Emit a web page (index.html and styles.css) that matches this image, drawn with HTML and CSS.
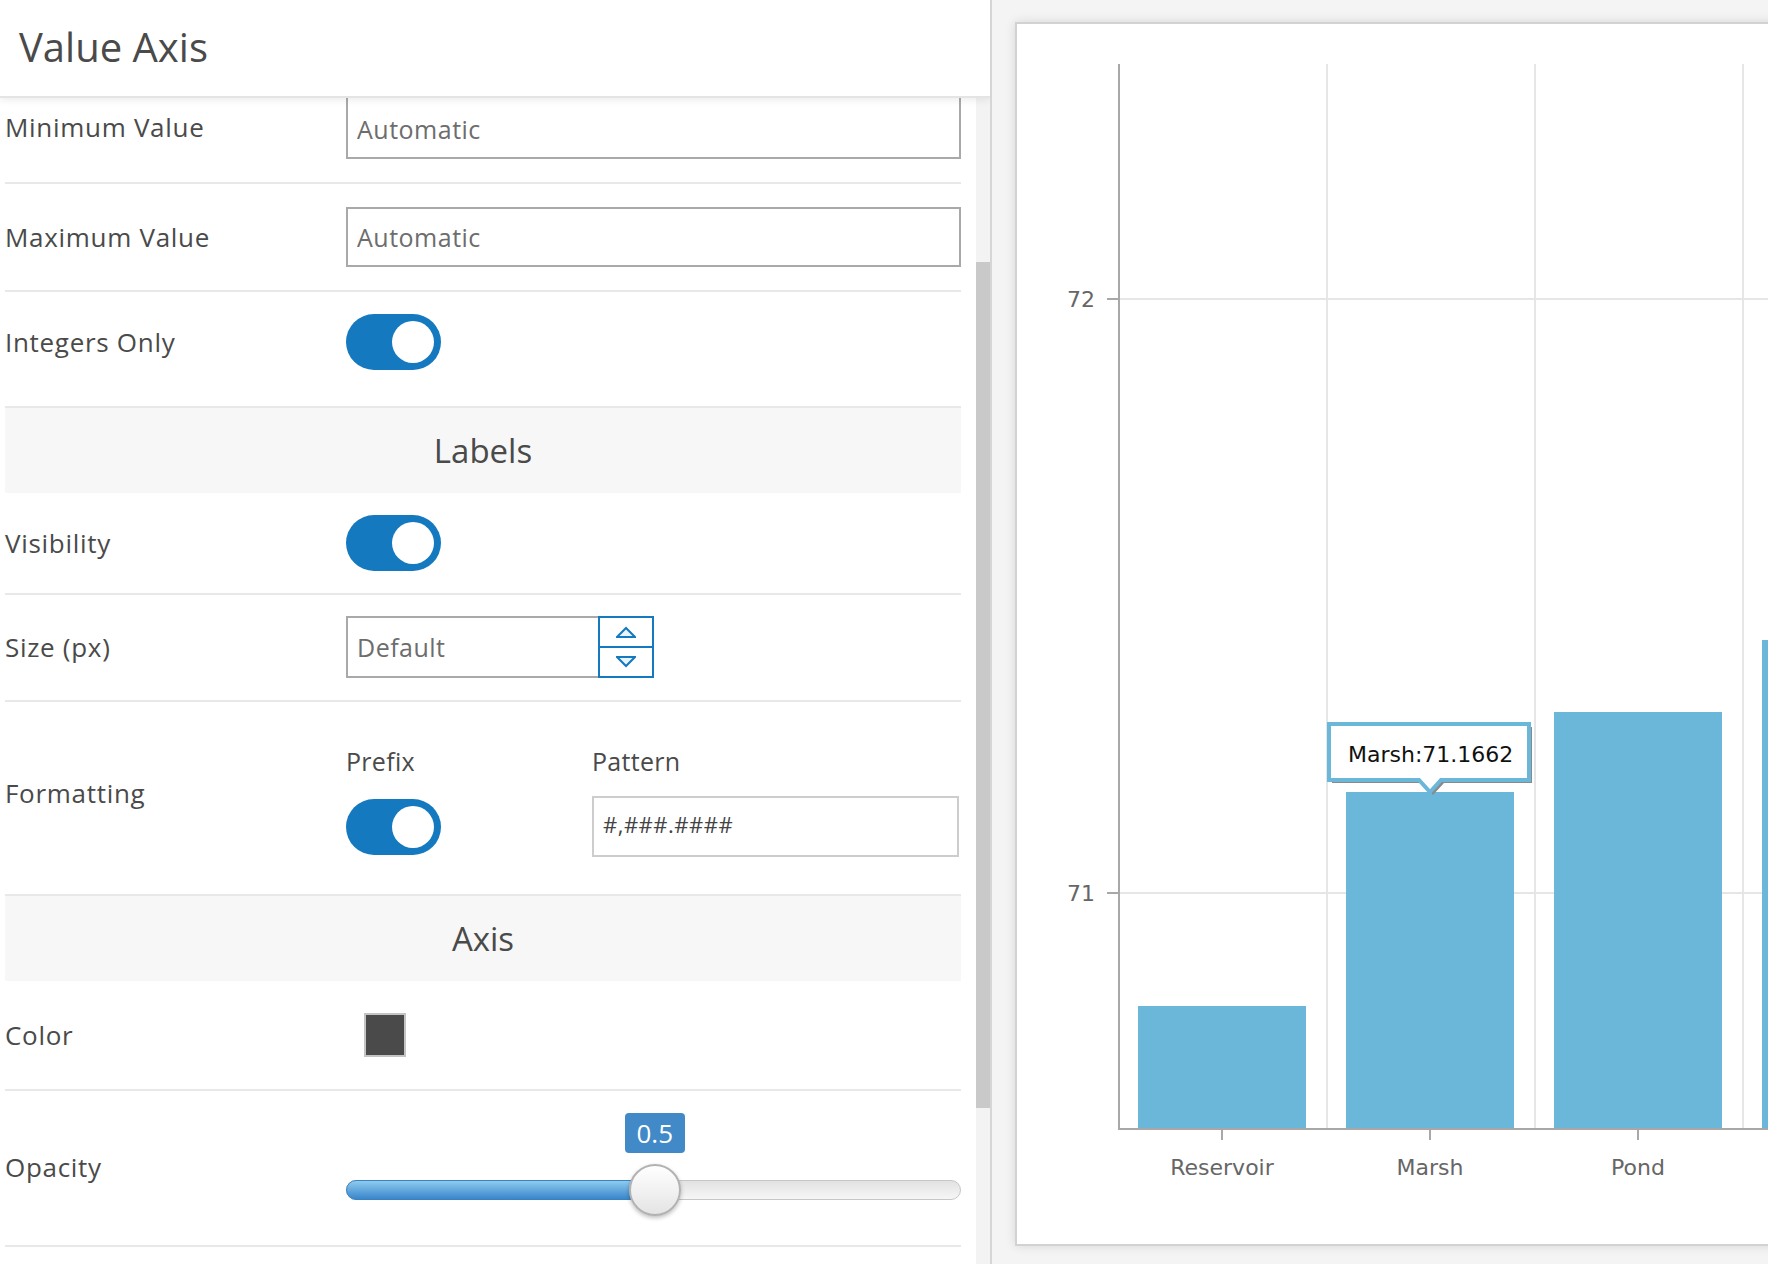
FILE: index.html
```html
<!DOCTYPE html>
<html lang="en">
<head>
    <meta charset="UTF-8">
    <meta name="viewport" content="width=device-width, initial-scale=1.0">
    <title>Value Axis</title>
    <link rel="stylesheet" href="styles.css">
</head>
<body>
<div class="layout">
    <aside class="settings">
        <header class="settings-header">
            <h1>Value Axis</h1>
        </header>
        <div class="settings-body">
            <div class="settings-list">
                <div class="row row-first">
                    <label class="row-label">Minimum Value</label>
                    <input type="text" class="text-input" placeholder="Automatic">
                </div>
                <div class="row">
                    <label class="row-label">Maximum Value</label>
                    <input type="text" class="text-input" placeholder="Automatic">
                </div>
                <div class="row row-toggle">
                    <label class="row-label">Integers Only</label>
                    <span class="toggle"><span class="toggle-knob"></span></span>
                </div>

                <h2 class="section-title">Labels</h2>

                <div class="row row-switch">
                    <label class="row-label">Visibility</label>
                    <span class="toggle"><span class="toggle-knob"></span></span>
                </div>
                <div class="row row-size">
                    <label class="row-label">Size (px)</label>
                    <div class="number-input">
                        <input type="text" class="text-input" placeholder="Default">
                        <div class="stepper">
                            <button class="stepper-btn" aria-label="Increase">
                                <svg width="20" height="12" viewBox="0 0 20 12"><polygon points="1,11 10,2 19,11" fill="#e9f3fa" stroke="#1479bf" stroke-width="2" stroke-linejoin="miter"/></svg>
                            </button>
                            <button class="stepper-btn" aria-label="Decrease">
                                <svg width="20" height="12" viewBox="0 0 20 12"><polygon points="1,1 19,1 10,10" fill="#e9f3fa" stroke="#1479bf" stroke-width="2" stroke-linejoin="miter"/></svg>
                            </button>
                        </div>
                    </div>
                </div>
                <div class="row row-format">
                    <label class="row-label">Formatting</label>
                    <div class="format-grid">
                        <span class="sub-label">Prefix</span>
                        <span class="sub-label">Pattern</span>
                        <span class="toggle"><span class="toggle-knob"></span></span>
                        <input type="text" class="text-input pattern-input" value="#,###.####">
                    </div>
                </div>

                <h2 class="section-title">Axis</h2>

                <div class="row row-color">
                    <label class="row-label">Color</label>
                    <span class="swatch"></span>
                </div>
                <div class="row row-opacity">
                    <label class="row-label">Opacity</label>
                    <div class="slider" style="--pos: 50.2%">
                        <span class="slider-badge">0.5</span>
                        <div class="slider-track">
                            <span class="slider-rail"></span>
                            <span class="slider-fill"></span>
                            <span class="slider-thumb"></span>
                        </div>
                    </div>
                </div>
            </div>
            <div class="scrollbar"><div class="scrollbar-thumb"></div></div>
        </div>
    </aside>

    <main class="stage">
        <div class="chart-card">
            <svg class="chart" width="1000" height="1220" viewBox="0 0 1000 1220">
                <!-- grid -->
                <g class="grid">
                    <line x1="102" y1="275" x2="1000" y2="275"/>
                    <line x1="102" y1="869" x2="1000" y2="869"/>
                    <line x1="310" y1="40" x2="310" y2="1105"/>
                    <line x1="518" y1="40" x2="518" y2="1105"/>
                    <line x1="726" y1="40" x2="726" y2="1105"/>
                </g>
                <!-- bars -->
                <g class="bars">
                    <rect x="121" y="982" width="168" height="123"/>
                    <rect x="329" y="768" width="168" height="337"/>
                    <rect x="537" y="688" width="168" height="417"/>
                    <rect x="745" y="616" width="168" height="489"/>
                </g>
                <!-- axes -->
                <g class="axis">
                    <line x1="102" y1="40" x2="102" y2="1106"/>
                    <line x1="101" y1="1105" x2="1000" y2="1105"/>
                    <line x1="90" y1="275" x2="102" y2="275"/>
                    <line x1="90" y1="869" x2="102" y2="869"/>
                    <line x1="205" y1="1105" x2="205" y2="1116"/>
                    <line x1="413" y1="1105" x2="413" y2="1116"/>
                    <line x1="621" y1="1105" x2="621" y2="1116"/>
                    <line x1="829" y1="1105" x2="829" y2="1116"/>
                </g>
                <g class="axis-labels">
                    <text x="78" y="283" text-anchor="end">72</text>
                    <text x="78" y="877" text-anchor="end">71</text>
                    <text x="205" y="1151" text-anchor="middle">Reservoir</text>
                    <text x="413" y="1151" text-anchor="middle">Marsh</text>
                    <text x="621" y="1151" text-anchor="middle">Pond</text>
                </g>
                <!-- tooltip -->
                <g class="tooltip">
                    <path class="tooltip-shadow" d="M315,703 H515 V759 H427 L416,771 L405,759 H315 Z"/>
                    <path class="tooltip-box" d="M312,700 H512 V756 H424 L413,768 L402,756 H312 Z"/>
                    <text x="331" y="738">Marsh:71.1662</text>
                </g>
            </svg>
        </div>
    </main>
</div>
</body>
</html>
```

FILE: styles.css
```css
* {
    box-sizing: border-box;
}
html, body {
    margin: 0;
    height: 100%;
}
body {
    font-family: "Open Sans", "Noto Sans", sans-serif;
    color: #4a4a4a;
    background-color: #f4f4f4;
    overflow: hidden;
}
.layout {
    display: flex;
    height: 1264px;
}

/* settings panel */
.settings {
    flex: 0 0 992px;
    display: flex;
    flex-direction: column;
    background-color: #fff;
    border-right: 2px solid #d6d6d6;
    overflow: hidden;
}
.settings-header {
    position: relative;
    z-index: 2;
    height: 98px;
    background-color: #fff;
    border-bottom: 2px solid #e4e4e4;
    box-shadow: 0 2px 8px rgba(0,0,0,0.08);
}
.settings-header h1 {
    margin: 0;
    padding-left: 19px;
    font-size: 40px;
    font-weight: 500;
    line-height: 93px;
    color: #4a4a4a;
}
.settings-body {
    flex: 1;
    display: flex;
    overflow: hidden;
}
.settings-list {
    flex: 0 0 961px;
    padding-left: 5px;
    margin-top: -22px;
}
.scrollbar {
    flex: 0 0 14px;
    margin-left: 15px;
    padding-top: 164px;
    background-color: #f3f3f3;
}
.scrollbar-thumb {
    height: 846px;
    background-color: #c9c9c9;
}

.row {
    display: grid;
    grid-template-columns: 341px 1fr;
    align-items: center;
    padding: 23px 0;
    border-bottom: 2px solid #e8e8e8;
}
.row-label {
    font-size: 26px;
    letter-spacing: 0.7px;
    color: #4a4a4a;
}
.row-first {
    padding: 19px 0 23px;
}
.row-first .text-input {
    height: 64px;
    padding-top: 4px;
}
.row-toggle {
    padding: 22px 0 36px;
}
.row-switch {
    padding: 22px 0;
}
.row-size {
    padding: 21px 0 22px;
}
.row-format {
    padding: 44px 0 37px;
}
.row-format .row-label {
    padding-bottom: 18px;
}
.row-color {
    padding: 32px 0;
}
.row-opacity {
    padding: 22px 0 29px;
}
.row-opacity .row-label {
    padding-top: 4px;
}

.section-title {
    margin: 0;
    height: 85px;
    display: flex;
    align-items: center;
    justify-content: center;
    background-color: #f7f7f7;
    font-size: 33px;
    font-weight: 500;
    color: #4a4a4a;
}

.text-input {
    display: block;
    width: 100%;
    height: 60px;
    padding: 0 9px;
    border: 2px solid #a9a9a9;
    border-radius: 0;
    background-color: #fff;
    font-family: inherit;
    font-size: 25px;
    letter-spacing: 0.5px;
    color: #4a4a4a;
    outline: none;
}
.text-input::placeholder {
    color: #6d6d6d;
}

.toggle {
    display: flex;
    justify-content: flex-end;
    align-items: center;
    width: 95px;
    height: 56px;
    padding: 0 7px;
    border-radius: 28px;
    background-color: #1479bf;
}
.toggle-knob {
    width: 42px;
    height: 42px;
    border-radius: 50%;
    background-color: #fff;
}

.number-input {
    display: flex;
    width: 308px;
    height: 62px;
}
.number-input .text-input {
    flex: 1;
    height: 62px;
    border-right: none;
}
.stepper {
    flex: 0 0 56px;
    display: flex;
    flex-direction: column;
    border: 2px solid #1479bf;
    background-color: #fff;
}
.stepper-btn {
    flex: 1;
    display: flex;
    align-items: center;
    justify-content: center;
    padding: 0;
    border: none;
    background: none;
}
.stepper-btn + .stepper-btn {
    border-top: 2px solid #1479bf;
}

.format-grid {
    display: grid;
    grid-template-columns: 246px 1fr;
    row-gap: 20px;
    align-items: center;
}
.sub-label {
    font-size: 25px;
    line-height: 30px;
    letter-spacing: 0.3px;
}
.pattern-input {
    width: calc(100% - 2px);
    height: 61px;
    padding-bottom: 6px;
    border-color: #cdcdcd;
    font-size: 22px;
    color: #444;
}

.swatch {
    width: 42px;
    height: 44px;
    margin-left: 18px;
    background-color: #4a4a4a;
    border: 2px solid #c4c4c4;
}

.slider-badge {
    display: block;
    width: 60px;
    height: 40px;
    margin-left: calc(var(--pos) - 30px);
    border-radius: 4px;
    background-color: #4289c8;
    color: #fff;
    font-size: 26px;
    line-height: 40px;
    text-align: center;
}
.slider-track {
    position: relative;
    height: 52px;
    margin-top: 11px;
}
.slider-rail {
    position: absolute;
    left: 0;
    right: 0;
    top: 16px;
    height: 20px;
    border-radius: 10px;
    border: 1px solid #c6c6c6;
    background: linear-gradient(#e2e2e2, #f6f6f6);
}
.slider-fill {
    position: absolute;
    left: 0;
    top: 16px;
    width: var(--pos);
    height: 20px;
    border-radius: 10px 0 0 10px;
    border: 1px solid #3b82c0;
    background: linear-gradient(#8dcbef, #3a86cb);
}
.slider-thumb {
    position: absolute;
    top: 0;
    left: calc(var(--pos) - 26px);
    width: 52px;
    height: 52px;
    border-radius: 50%;
    border: 2px solid #b2b2b2;
    background: linear-gradient(#ffffff, #e4e4e4);
    box-shadow: 0 2px 4px rgba(0,0,0,0.25);
}

/* chart */
.stage {
    flex: 1;
    padding: 22px 0 0 23px;
    overflow: hidden;
    background-color: #f4f4f4;
}
.chart-card {
    width: 1000px;
    height: 1224px;
    background-color: #fff;
    border: 2px solid #d2d2d2;
    box-shadow: 0 0 10px rgba(0,0,0,0.12);
}
.chart {
    display: block;
}
.chart .grid line {
    stroke: #e6e6e6;
    stroke-width: 2;
}
.chart .bars rect {
    fill: #6ab7d9;
}
.chart .axis line {
    stroke: #a8a8a8;
    stroke-width: 2;
}
.chart text {
    font-family: "DejaVu Sans", Verdana, sans-serif;
    font-size: 22px;
    fill: #666;
}
.tooltip-shadow {
    fill: #8a8a8a;
}
.tooltip-box {
    fill: #fff;
    stroke: #6ab7d9;
    stroke-width: 4;
}
.chart .tooltip text {
    fill: #111;
}
```
